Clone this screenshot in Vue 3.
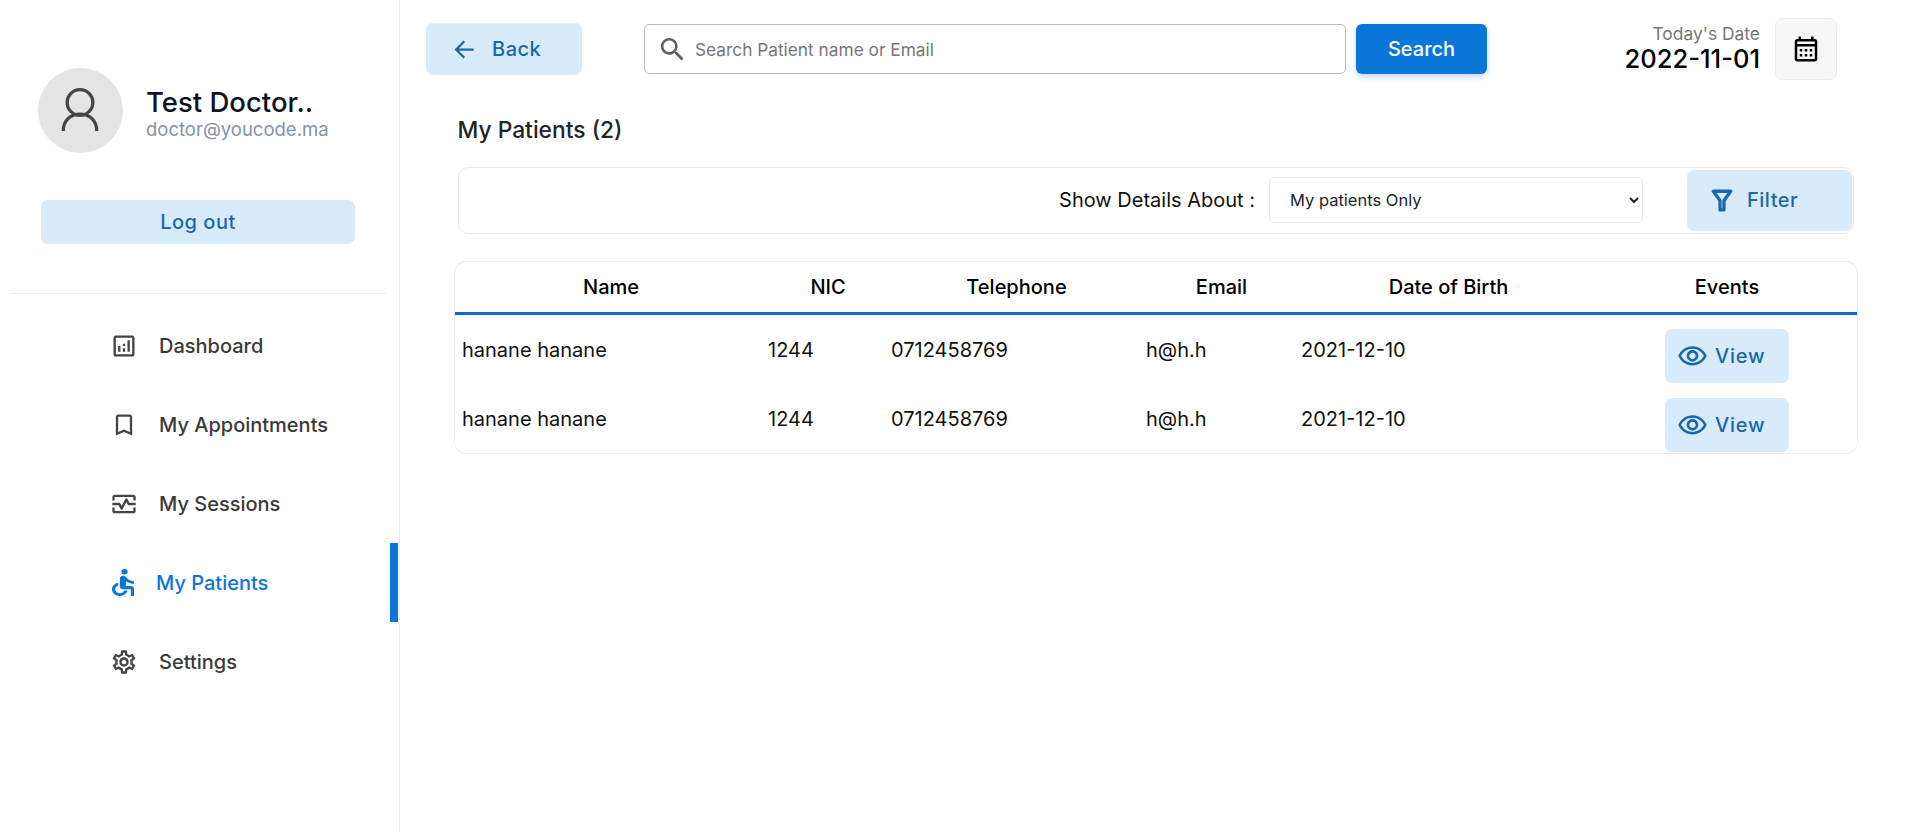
<script setup>
import { ref } from 'vue';

const navItems = [
  { label: 'Dashboard', icon: 'dashboard' },
  { label: 'My Appointments', icon: 'bookmark' },
  { label: 'My Sessions', icon: 'sessions' },
  { label: 'My Patients', icon: 'patients', active: true },
  { label: 'Settings', icon: 'settings' },
];

const columns = ['Name', 'NIC', 'Telephone', 'Email', 'Date of Birth', 'Events'];

const patients = ref([
  { id: 1, name: 'hanane hanane', nic: '1244', phone: '0712458769', email: 'h@h.h', dob: '2021-12-10' },
  { id: 2, name: 'hanane hanane', nic: '1244', phone: '0712458769', email: 'h@h.h', dob: '2021-12-10' },
]);

const search = ref('');
const show = ref('mine');
</script>

<template>
  <div class="page">
    <aside class="sidebar">
      <div class="profile">
        <div class="avatar">
          <svg viewBox="0 0 40 42" width="44" height="46" fill="none" stroke="#444" stroke-width="3">
            <circle cx="20" cy="16" r="11.700" />
            <path d="M4.700 42c0-9.500 6.500-15.500 15.300-15.500S35.300 32.500 35.300 42" />
          </svg>
        </div>
        <div class="profile-text">
          <div class="profile-name">Test Doctor..</div>
          <div class="profile-mail">doctor@youcode.ma</div>
        </div>
      </div>
      <button class="soft logout">Log out</button>
      <hr class="divider" />
      <nav class="nav">
        <a v-for="item in navItems" :key="item.label" class="nav-item" :class="{ active: item.active }">
          <svg v-if="item.icon === 'dashboard'" class="nav-icon" viewBox="0 0 24 24" fill="#444">
            <path d="M19 3H5c-1.100 0-2 .9-2 2v14c0 1.100.9 2 2 2h14c1.100 0 2-.9 2-2V5c0-1.100-.9-2-2-2zm0 16H5V5h14v14z" />
            <path d="M7 12h2v5H7zM15 7h2v10h-2zM11 14h2v3h-2zM11 10h2v2h-2z" />
          </svg>
          <svg v-else-if="item.icon === 'bookmark'" class="nav-icon" viewBox="0 0 24 24" fill="#444">
            <path d="M17 3H7c-1.100 0-2 .9-2 2v16l7-3 7 3V5c0-1.100-.9-2-2-2zm0 15-5-2.180L7 18V5h10v13z" />
          </svg>
          <svg v-else-if="item.icon === 'sessions'" class="nav-icon" viewBox="0 0 24 24" fill="#444">
            <path d="M20 4H4c-1.100 0-2 .9-2 2v3h2V6h16v3h2V6c0-1.100-.9-2-2-2z" />
            <path d="M20 18H4v-3H2v3c0 1.100.9 2 2 2h16c1.100 0 2-.9 2-2v-3h-2v3z" />
            <path d="M14.890 7.550c-.34-.68-1.450-.68-1.790 0L10 13.760l-1.110-2.210C8.720 11.210 8.380 11 8 11H2v2h5.380l1.720 3.450c.18.34.52.55.9.55s.72-.21.89-.55L14 10.240l1.110 2.210c.17.34.51.55.89.55h6v-2h-5.380l-1.730-3.450z" />
          </svg>
          <svg v-else-if="item.icon === 'patients'" class="nav-icon patients-icon" viewBox="6 1 14 20" preserveAspectRatio="none" fill="#0a76d8">
            <circle cx="14" cy="3" r="2" />
            <path d="M20 12v-2c-1.540.02-3.090-.75-4.070-1.830l-1.290-1.430c-.17-.19-.38-.34-.61-.45-.01 0-.01-.01-.02-.01H14c-.35-.2-.75-.3-1.190-.26C11.760 6.110 11 7.040 11 8.090V14c0 1.100.9 2 2 2h5v5h2v-5.500c0-1.100-.9-2-2-2h-3v-3.450c1.290 1.070 3.250 1.940 5 1.950zm-6.170 5c-.41 1.160-1.520 2-2.830 2-1.660 0-3-1.340-3-3 0-1.310.84-2.410 2-2.830V11.100c-2.280.46-4 2.480-4 4.900 0 2.760 2.240 5 5 5 2.420 0 4.440-1.720 4.900-4h-2.070z" />
          </svg>
          <svg v-else class="nav-icon" viewBox="0 0 24 24" fill="#444">
            <path d="M19.430 12.980c.04-.32.07-.64.07-.98 0-.34-.03-.66-.07-.98l2.110-1.650c.19-.15.24-.42.12-.64l-2-3.460c-.09-.16-.26-.25-.44-.25-.06 0-.12.01-.17.03l-2.490 1c-.52-.4-1.080-.73-1.690-.98l-.38-2.650C14.460 2.180 14.250 2 14 2h-4c-.25 0-.46.18-.49.42l-.38 2.650c-.61.25-1.170.59-1.690.98l-2.490-1c-.06-.02-.12-.03-.18-.03-.17 0-.34.09-.43.25l-2 3.460c-.13.22-.07.49.12.64l2.110 1.650c-.04.32-.07.65-.07.98 0 .33.03.66.07.98l-2.110 1.650c-.19.15-.24.42-.12.64l2 3.460c.09.16.26.25.44.25.06 0 .12-.01.17-.03l2.490-1c.52.4 1.080.73 1.690.98l.38 2.650c.03.24.24.42.49.42h4c.25 0 .46-.18.49-.42l.38-2.650c.61-.25 1.170-.59 1.690-.98l2.490 1c.06.02.12.03.18.03.17 0 .34-.09.43-.25l2-3.460c.12-.22.07-.49-.12-.64l-2.110-1.650zm-1.980-1.710c.04.31.05.52.05.73 0 .21-.02.43-.05.73l-.14 1.130.89.7 1.080.84-.7 1.210-1.270-.51-1.040-.42-.9.68c-.43.32-.84.56-1.250.73l-1.060.43-.16 1.130-.2 1.350h-1.400l-.19-1.350-.16-1.130-1.060-.43c-.43-.18-.83-.41-1.230-.71l-.91-.7-1.060.43-1.270.51-.7-1.210 1.080-.84.89-.7-.14-1.130c-.03-.31-.05-.54-.05-.74s.02-.43.05-.73l.14-1.130-.89-.7-1.080-.84.7-1.210 1.270.51 1.040.42.9-.68c.43-.32.84-.56 1.250-.73l1.060-.43.16-1.130.2-1.350h1.390l.19 1.350.16 1.130 1.060.43c.43.18.83.41 1.230.71l.91.7 1.060-.43 1.270-.51.7 1.210-1.070.85-.89.7.14 1.130zM12 8c-2.210 0-4 1.790-4 4s1.790 4 4 4 4-1.790 4-4-1.790-4-4-4zm0 6c-1.100 0-2-.9-2-2s.9-2 2-2 2 .9 2 2-.9 2-2 2z" />
          </svg>
          <span>{{ item.label }}</span>
        </a>
      </nav>
    </aside>

    <main class="main">
      <div class="topbar">
        <button class="soft back">
          <svg viewBox="0 0 24 24" width="27" height="27" fill="#1969aa">
            <path d="M21 11H7.830l5.590-5.590L12 4l-8 8 8 8 1.410-1.410L7.830 13H21v-2z" />
          </svg>
          Back
        </button>
        <div class="search-box">
          <svg viewBox="0 0 24 24" width="31" height="31" fill="#5f5f5f">
            <path d="M15.500 14h-.79l-.28-.27C15.410 12.590 16 11.110 16 9.500 16 5.910 13.090 3 9.500 3S3 5.910 3 9.500 5.910 16 9.500 16c1.610 0 3.090-.59 4.230-1.570l.27.28v.79l5 4.990L20.490 19l-4.990-5zm-6 0C7.010 14 5 11.990 5 9.500S7.010 5 9.500 5 14 7.010 14 9.500 11.990 14 9.500 14z" />
          </svg>
          <input v-model="search" placeholder="Search Patient name or Email" />
        </div>
        <button class="search-btn">Search</button>
        <div class="date">
          <div class="date-label">Today's Date</div>
          <div class="date-value">2022-11-01</div>
        </div>
        <div class="calendar">
          <svg viewBox="0 0 24 24" width="30" height="30" fill="#000">
            <path d="M19 4h-1V2h-2v2H8V2H6v2H5c-1.100 0-2 .9-2 2v14c0 1.100.9 2 2 2h14c1.100 0 2-.9 2-2V6c0-1.100-.9-2-2-2zm0 16H5V10h14v10zm0-12H5V6h14v2z" />
            <path d="M7 12h2v2H7zM11 12h2v2h-2zM15 12h2v2h-2zM7 16h2v2H7zM11 16h2v2h-2zM15 16h2v2h-2z" />
          </svg>
        </div>
      </div>

      <h2 class="title">My Patients (2)</h2>

      <div class="filter-bar">
        <label class="filter-label">Show Details About :</label>
        <select v-model="show" class="filter-select">
          <option value="mine">My patients Only</option>
          <option value="all">All patients</option>
        </select>
        <button class="soft filter-btn">
          <svg viewBox="0 0 24 24" width="28" height="28" fill="none" stroke="#1969aa" stroke-width="2.800" stroke-linejoin="round">
            <path d="M4.500 4.500h15l-5.800 8v8h-3.400v-8z" />
          </svg>
          Filter
        </button>
      </div>

      <div class="table-wrap">
        <table class="table">
          <colgroup>
            <col class="c-name" /><col class="c-nic" /><col class="c-tel" /><col class="c-mail" /><col class="c-dob" /><col />
          </colgroup>
          <thead>
            <tr>
              <th v-for="col in columns" :key="col">{{ col }}</th>
            </tr>
          </thead>
          <tbody>
            <tr v-for="p in patients" :key="p.id">
              <td>{{ p.name }}</td>
              <td>{{ p.nic }}</td>
              <td>{{ p.phone }}</td>
              <td>{{ p.email }}</td>
              <td>{{ p.dob }}</td>
              <td class="events">
                <button class="soft view">
                  <svg viewBox="0 0 24 24" width="31" height="31" fill="#1969aa">
                    <path d="M12 6c3.790 0 7.170 2.130 8.820 5.500C19.170 14.870 15.790 17 12 17s-7.170-2.130-8.820-5.500C4.830 8.130 8.210 6 12 6m0-2C7 4 2.730 7.110 1 11.500 2.730 15.890 7 19 12 19s9.270-3.110 11-7.500C21.270 7.110 17 4 12 4zm0 5c1.380 0 2.500 1.120 2.500 2.500S13.380 14 12 14s-2.500-1.120-2.500-2.500S10.620 9 12 9m0-2c-2.480 0-4.500 2.020-4.500 4.500S9.520 16 12 16s4.500-2.020 4.500-4.500S14.480 7 12 7z" />
                  </svg>
                  View
                </button>
              </td>
            </tr>
          </tbody>
        </table>
      </div>
    </main>
  </div>
</template>

<style scoped>
.page {
  display: flex;
  min-height: 832px;
  font-family: Inter, "Liberation Sans", sans-serif;
  color: #000;
  background: #fff;
}

.sidebar {
  width: 399px;
  flex: none;
  border-right: 1px solid #ebebeb;
  padding-top: 68px;
}

.profile {
  display: flex;
  align-items: center;
  gap: 23px;
  padding-left: 38px;
}

.avatar {
  width: 85px;
  height: 85px;
  border-radius: 50%;
  background: #e4e4e4;
  display: flex;
  align-items: center;
  justify-content: center;
}

.avatar svg {
  margin: 0 2px 5px 0;
}

.profile-text {
  padding-top: 5px;
}

.profile-name {
  font-size: 27.500px;
  font-weight: 500;
  line-height: 32px;
  color: #0e1220;
}

.profile-mail {
  font-size: 18.500px;
  line-height: 22px;
  color: #8492a6;
}

.soft {
  border: none;
  border-radius: 7px;
  background: #d8ebfa;
  color: #1969aa;
  font-family: inherit;
  font-weight: 500;
  cursor: pointer;
}

.logout {
  display: block;
  width: 314px;
  height: 44px;
  margin: 47px 0 0 41px;
  font-size: 20px;
  letter-spacing: 0.5px;
}

.divider {
  border: none;
  border-top: 1px solid #ebebeb;
  margin: 49px 13px 0 10px;
}

.nav {
  display: flex;
  flex-direction: column;
  margin-top: 12px;
}

.nav-item {
  position: relative;
  display: flex;
  align-items: center;
  gap: 21px;
  height: 79px;
  padding-left: 110px;
  font-size: 20px;
  font-weight: 500;
  color: #3a3a3a;
}

.nav-item.active {
  color: #0a76d8;
  gap: 22px;
}

.nav-item.active::after {
  content: "";
  position: absolute;
  top: 0;
  right: 1px;
  width: 8px;
  height: 100%;
  background: #0a76d8;
}

.nav-icon {
  width: 28px;
  height: 28px;
  flex: none;
}

.nav-icon.patients-icon {
  width: 22px;
  height: 27px;
  margin-left: 2px;
}

.main {
  flex: 1;
  min-width: 0;
}

.topbar {
  display: flex;
  align-items: center;
  height: 62px;
  margin-top: 18px;
  padding-left: 26px;
}

.back {
  display: flex;
  align-items: center;
  gap: 15px;
  width: 156px;
  height: 52px;
  padding-left: 24px;
  font-size: 20px;
  letter-spacing: 0.5px;
}

.search-box {
  display: flex;
  align-items: center;
  gap: 5px;
  box-sizing: border-box;
  width: 702px;
  height: 50px;
  margin-left: 62px;
  padding-left: 12px;
  border: 1.500px solid #bdbdbd;
  border-radius: 5px;
}

.search-box input {
  flex: 1;
  border: none;
  outline: none;
  font-family: inherit;
  font-size: 17.300px;
  color: #333;
}

.search-box input::placeholder {
  color: #777;
}

.search-btn {
  width: 131px;
  height: 50px;
  margin-left: 10px;
  border: none;
  border-radius: 6px;
  background: #0a76d8;
  color: #fff;
  font-family: inherit;
  font-size: 20px;
  font-weight: 500;
  box-shadow: 0 3px 6px rgba(57, 130, 240, 0.3);
}

.date {
  margin: 0 0 2px auto;
  text-align: right;
}

.date-label {
  font-size: 17.400px;
  line-height: 22px;
  color: #777;
}

.date-value {
  font-size: 25.500px;
  font-weight: 500;
  line-height: 28px;
}

.calendar {
  width: 62px;
  height: 62px;
  margin: 0 81px 0 15px;
  box-sizing: border-box;
  border: 1px solid #ececec;
  border-radius: 7px;
  background: #f7f7f8;
  display: flex;
  align-items: center;
  justify-content: center;
}

.title {
  margin: 36px 0 0 57.500px;
  font-size: 22.800px;
  font-weight: 500;
  line-height: 28px;
  color: #212529;
}

.filter-bar {
  display: flex;
  align-items: center;
  justify-content: flex-end;
  box-sizing: border-box;
  height: 67px;
  margin: 23px 64px 0 58px;
  padding-right: 1px;
  border: 1px solid #ebebeb;
  border-radius: 10px;
}

.filter-label {
  margin-bottom: 2px;
  font-size: 20px;
  color: #111;
}

.filter-select {
  width: 374px;
  height: 46px;
  margin: 0 44px 2px 14px;
  padding-left: 16px;
  border: 1px solid #ebebeb;
  border-radius: 5px;
  background: #fff;
  font-family: inherit;
  font-size: 16.500px;
  color: #212529;
}

.filter-btn {
  display: flex;
  align-items: center;
  gap: 11px;
  width: 165px;
  height: 61px;
  padding: 0 0 2px 21px;
  font-size: 20px;
  letter-spacing: 0.5px;
}

.table-wrap {
  margin: 27px 60px 0 54px;
  border: 1px solid #ebebeb;
  border-radius: 12px;
  overflow: hidden;
}

.table {
  width: 100%;
  border-collapse: collapse;
  table-layout: fixed;
}

.c-name { width: 306px; }
.c-nic { width: 123px; }
.c-tel { width: 255px; }
.c-mail { width: 155px; }
.c-dob { width: 305px; }

.table th {
  height: 50px;
  padding: 0 0 0 6px;
  border-bottom: 3px solid #0a6cc8;
  font-size: 20px;
  font-weight: 500;
  text-align: center;
}

.table th:nth-child(2) { padding-left: 11px; }
.table th:nth-child(3),
.table th:nth-child(4) { padding-left: 10px; }
.table th:nth-child(5) { padding-left: 4px; }
.table th:nth-child(6) { padding: 0 2px 0 0; }

.table td {
  padding: 24px 0 0 7px;
  vertical-align: top;
  font-size: 20px;
  line-height: 24px;
  color: #111;
}

.table tbody tr:first-child td {
  padding-top: 23px;
}

.table td.events,
.table tbody tr:first-child td.events {
  padding: 15px 2px 0 0;
  text-align: center;
}

.table tbody tr:first-child td.events {
  padding-top: 14px;
}

.table tbody tr:last-child td.events {
  padding-bottom: 1px;
}

.view {
  display: inline-flex;
  align-items: center;
  gap: 7px;
  width: 124px;
  height: 54px;
  padding-left: 12px;
  font-size: 20px;
  letter-spacing: 0.8px;
  vertical-align: top;
}
</style>

<style>
html, body {
  margin: 0;
  background: #fff;
}
</style>
